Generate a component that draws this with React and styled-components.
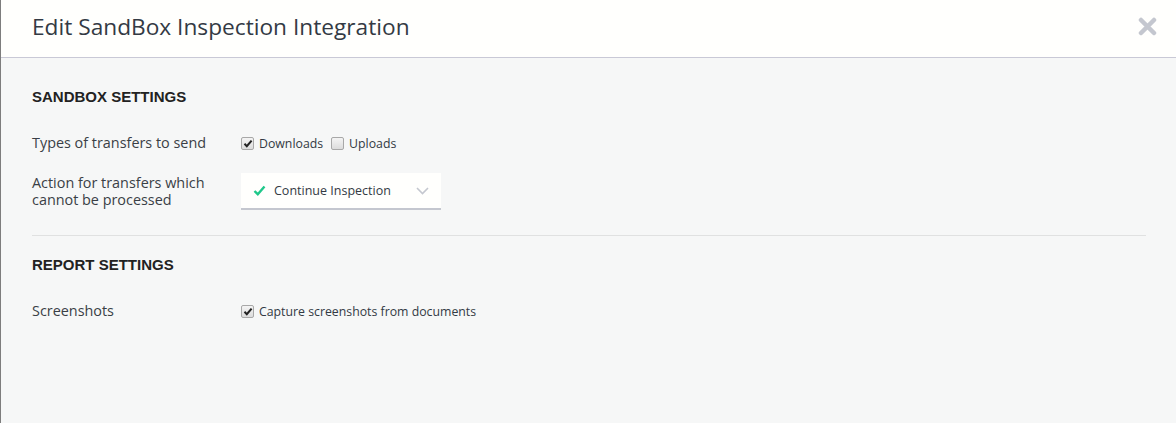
import React from "react";
import styled, { createGlobalStyle } from "styled-components";

const Global = createGlobalStyle`
  html, body { margin: 0; padding: 0; }
  body { background: #f6f7f7; font-family: "Open Sans", "Liberation Sans", sans-serif; }
  #root { min-height: 423px; }
`;

const Modal = styled.div`
  height: 423px;
  box-sizing: border-box;
  border-left: 1px solid #7d7d7d;
  background: #f6f7f7;
  display: flex;
  flex-direction: column;
`;

const Header = styled.div`
  height: 58px;
  box-sizing: border-box;
  background: #fffffd;
  border-bottom: 1px solid #c9c9d6;
  display: flex;
  align-items: center;
  justify-content: space-between;
  padding: 0 18px 4px 31px;
`;

const Title = styled.h1`
  margin: 0;
  font-family: "Open Sans", sans-serif;
  font-weight: 400;
  font-size: 22.7px;
  color: #333a44;
`;

const Close = styled.button`
  border: 0;
  background: none;
  padding: 0;
  margin-bottom: 1px;
  width: 22px;
  height: 22px;
  display: flex;
  align-items: center;
  justify-content: center;
  cursor: pointer;
`;

const Body = styled.div`
  padding: 0 30px 0 31px;
`;

const Section = styled.section`
  padding: ${(p) => p.$top}px 0 25px;
  border-bottom: ${(p) => (p.$divider ? "1px solid #e0e1e1" : "none")};
`;

const SectionTitle = styled.h2`
  margin: 0 0 30px;
  font-family: "Liberation Sans", Arial, sans-serif;
  font-weight: 700;
  font-size: 15px;
  color: #222;
  line-height: 16px;
`;

const Row = styled.div`
  display: grid;
  grid-template-columns: 209px 1fr;
  align-items: center;
  margin-top: ${(p) => p.$gap || 0}px;
`;

const Label = styled.div`
  font-family: "Open Sans", sans-serif;
  font-size: 14.4px;
  line-height: 16.5px;
  color: #3a3f46;
`;

const Controls = styled.div`
  display: flex;
  align-items: center;
  gap: 8px;
`;

const CheckLabel = styled.label`
  display: flex;
  align-items: center;
  gap: 5px;
  font-family: "Open Sans", sans-serif;
  font-size: 12.3px;
  color: #333a44;
`;

const Box = styled.span`
  width: 11px;
  height: 11px;
  border: 1px solid #a8a8a8;
  border-radius: 2px;
  background: linear-gradient(#f4f4f4, #dcdcdc);
  display: flex;
  align-items: center;
  justify-content: center;
`;

const Select = styled.div`
  width: 200px;
  height: 37px;
  box-sizing: border-box;
  background: #fffffd;
  border-bottom: 2px solid #c4c7cf;
  display: flex;
  align-items: center;
  padding: 0 12px 0 12px;
  gap: 8px;
`;

const SelectText = styled.span`
  flex: 1;
  font-family: "Open Sans", sans-serif;
  font-size: 12.5px;
  color: #333a44;
`;

const Check = ({ checked, children }) => (
  <CheckLabel>
    <Box>
      {checked && (
        <svg width="10" height="9" viewBox="0 0 10 9">
          <path d="M1.5 4.8 L3.8 7.2 L8.6 1.6" fill="none" stroke="#222" strokeWidth="2" />
        </svg>
      )}
    </Box>
    {children}
  </CheckLabel>
);

export default function App() {
  return (
    <>
      <Global />
      <Modal>
        <Header>
          <Title>Edit SandBox Inspection Integration</Title>
          <Close aria-label="close">
            <svg width="19" height="19" viewBox="0 0 19 19">
              <path d="M3 3 L16 16 M16 3 L3 16" stroke="#c4c7cf" strokeWidth="4.5" strokeLinecap="round" />
            </svg>
          </Close>
        </Header>
        <Body>
          <Section $divider $top={31}>
            <SectionTitle>SANDBOX SETTINGS</SectionTitle>
            <Row>
              <Label>Types of transfers to send</Label>
              <Controls>
                <Check checked>Downloads</Check>
                <Check>Uploads</Check>
              </Controls>
            </Row>
            <Row $gap={21}>
              <Label>
                Action for transfers which
                <br />
                cannot be processed
              </Label>
              <Select>
                <svg width="13" height="11" viewBox="0 0 13 11">
                  <path d="M1.5 6 L4.8 9.2 L11.5 1.5" fill="none" stroke="#1fc88a" strokeWidth="2.4" />
                </svg>
                <SelectText>Continue Inspection</SelectText>
                <svg width="13" height="8" viewBox="0 0 13 8">
                  <path d="M1 1 L6.5 6.5 L12 1" fill="none" stroke="#c4c7cf" strokeWidth="1.6" />
                </svg>
              </Select>
            </Row>
          </Section>
          <Section $top={21}>
            <SectionTitle>REPORT SETTINGS</SectionTitle>
            <Row>
              <Label>Screenshots</Label>
              <Controls>
                <Check checked>Capture screenshots from documents</Check>
              </Controls>
            </Row>
          </Section>
        </Body>
      </Modal>
    </>
  );
}
